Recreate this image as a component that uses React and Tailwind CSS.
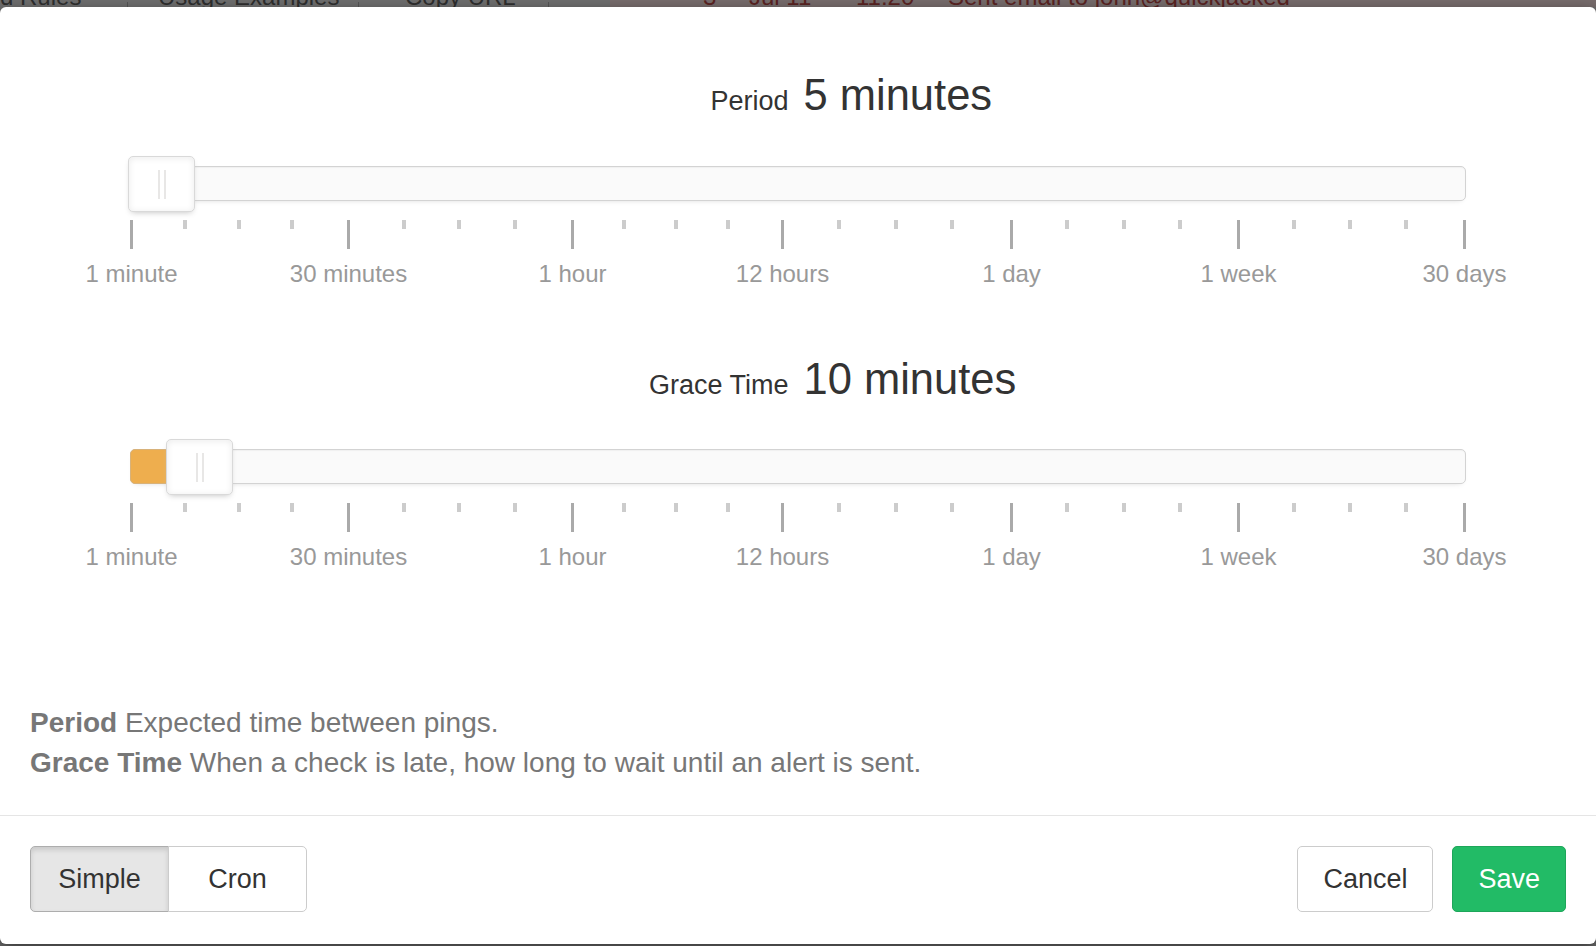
import React from 'react';

const font = { fontFamily: '"Liberation Sans", Arial, sans-serif' };

// the pips are not evenly spread: every big pip starts a segment of its own width
const segments = [
  { w: 'w-[217px]', label: '1 minute' },
  { w: 'w-[224px]', label: '30 minutes' },
  { w: 'w-[210px]', label: '1 hour' },
  { w: 'w-[229px]', label: '12 hours' },
  { w: 'w-[227px]', label: '1 day' },
  { w: 'w-[226px]', label: '1 week' },
];

function Handle({ className }) {
  return (
    <div
      className={
        'absolute top-[-11px] flex h-[56px] w-[67px] justify-center gap-[4px] rounded-[5px] border border-[#d9d9d9] bg-white pt-[13px] shadow-[inset_0_0_1px_#fff,inset_0_1px_7px_#ebebeb,0_3px_6px_-3px_#bbb] ' +
        className
      }
    >
      <div className="h-[29px] w-[2px] bg-[#e8e7e6]" />
      <div className="h-[29px] w-[2px] bg-[#e8e7e6]" />
    </div>
  );
}

function PipLabel({ text }) {
  return (
    <div className="flex w-[3px] shrink-0 justify-center">
      <span className="whitespace-nowrap text-[24px] leading-[29px] text-[#999]">{text}</span>
    </div>
  );
}

function Slider({ label, value, grace }) {
  return (
    <div>
      <div className="grid grid-cols-2 items-baseline gap-[15px] pr-[4px] text-[#333]">
        <div className="text-right text-[27px] leading-none">{label}</div>
        <div className="text-left text-[43.5px] leading-none">{value}</div>
      </div>

      <div className="mx-[100px] mt-[48px]">
        <div className="relative h-[35px] rounded-[5px] border border-[#d3d3d3] bg-[#fafafa] shadow-[inset_0_1px_1px_#f0f0f0,0_3px_6px_-5px_#bbb]">
          {grace && (
            <div className="absolute left-[-1px] top-[-1px] bottom-[-1px] w-[70px] rounded-l-[5px] border border-[#d8b27a] bg-[#eeae4e]" />
          )}
          {grace ? <Handle className="left-[35px]" /> : <Handle className="left-[-3px]" />}
        </div>

        <div className="mt-[19px] flex h-[29px] items-start">
          {segments.map((s) => (
            <div key={s.label} className={'flex shrink-0 items-start justify-between ' + s.w}>
              <div className="h-[29px] w-[3px] bg-[#aaa]" />
              <div className="h-[9px] w-[4px] bg-[#ccc]" />
              <div className="h-[9px] w-[4px] bg-[#ccc]" />
              <div className="h-[9px] w-[4px] bg-[#ccc]" />
              <div className="w-[3px]" />
            </div>
          ))}
          <div className="h-[29px] w-[3px] bg-[#aaa]" />
        </div>

        <div className="mt-[10px] flex h-[29px]">
          {segments.map((s) => (
            <div key={s.label} className={'flex shrink-0 ' + s.w}>
              <PipLabel text={s.label} />
            </div>
          ))}
          <PipLabel text="30 days" />
        </div>
      </div>
    </div>
  );
}

export default function App() {
  return (
    <div className="flex h-[946px] w-[1596px] flex-col overflow-hidden bg-[#6e6e6e]" style={font}>
      {/* page behind the backdrop, only its bottom edge shows */}
      <div className="flex h-[7px] shrink-0 items-end overflow-hidden text-[24px] leading-none text-[#2e2e2e]">
        <div className="mb-[-2px] flex items-end">
          <span className="w-[127px]">d Rules</span>
          <span className="h-[7px] w-px bg-[#555]" />
          <span className="ml-[30px] w-[200px]">Usage Examples</span>
          <span className="h-[7px] w-px bg-[#555]" />
          <span className="ml-[46px] w-[143px]">Copy URL</span>
          <span className="h-[7px] w-px bg-[#555]" />
        </div>
        <div className="ml-[61px] flex h-[7px] flex-1 items-end bg-[#776c6c] pl-[93px] text-[#5a2322]">
          <span className="mb-[-2px] w-[46px]">3</span>
          <span className="mb-[-2px] w-[107px]">Jul 11</span>
          <span className="mb-[-2px] w-[92px]">11:20</span>
          <span className="mb-[-2px]">Sent email to john@quickjacked</span>
        </div>
      </div>

      <div className="flex h-[937px] w-[1596px] shrink-0 flex-col rounded-[6px] bg-white shadow-[0_5px_15px_rgba(0,0,0,0.5)]">
        <div className="px-[30px] pt-[67px] pb-[32px]">
          <Slider label="Period" value="5 minutes" />
          <div className="mt-[70px]">
            <Slider label="Grace Time" value="10 minutes" grace />
          </div>

          <div className="mt-[132px] text-[28px] leading-[40px] text-[#777]">
            <div>
              <b>Period</b> Expected time between pings.
            </div>
            <div>
              <b>Grace Time</b> When a check is late, how long to wait until an alert is sent.
            </div>
          </div>
        </div>

        <div className="flex items-center justify-between border-t border-[#e5e5e5] px-[30px] pt-[30px]">
          <div className="flex">
            <button className="h-[66px] w-[139px] rounded-l-[5px] border border-[#adadad] bg-[#e6e6e6] text-[27px] text-[#333] shadow-[inset_0_3px_5px_rgba(0,0,0,0.125)]">
              Simple
            </button>
            <button className="ml-[-1px] h-[66px] w-[139px] rounded-r-[5px] border border-[#ccc] bg-white text-[27px] text-[#333]">
              Cron
            </button>
          </div>
          <div className="flex gap-[19px]">
            <button className="h-[66px] rounded-[5px] border border-[#ccc] bg-white px-[25px] text-[27px] text-[#333]">
              Cancel
            </button>
            <button className="h-[66px] rounded-[5px] border border-[#1ea65a] bg-[#22bb66] px-[25px] text-[27px] text-white">
              Save
            </button>
          </div>
        </div>
      </div>
    </div>
  );
}
